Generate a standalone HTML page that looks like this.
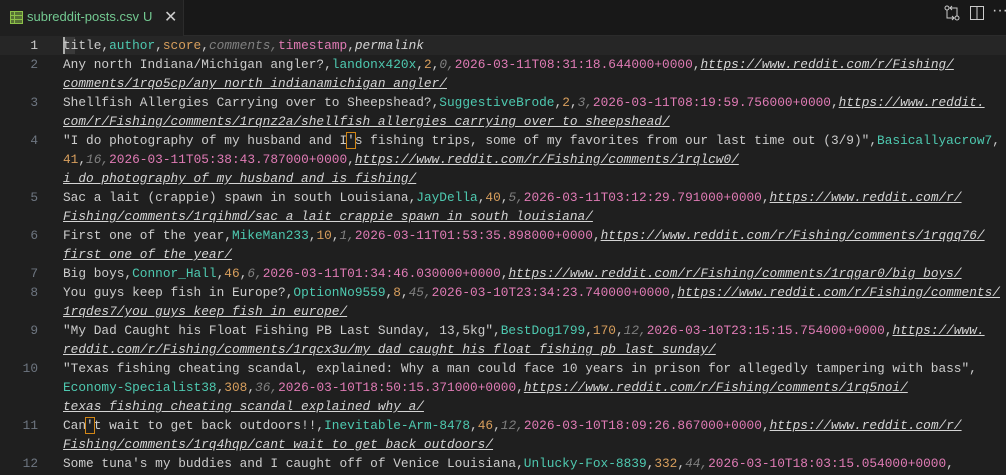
<html><head><style>
body{margin:0;width:1006px;height:475px;background:#1f1f1f;overflow:hidden;font-family:"Liberation Mono",monospace;font-size:12.8px;color:#cccccc}
.tabs{position:absolute;left:0;top:0;width:1006px;height:35px;background:#181818;border-bottom:1px solid #2b2b2b}
.tab{position:absolute;left:0;top:0;width:183px;height:36px;background:#1f1f1f;border-right:1px solid #2b2b2b;font-family:"Liberation Sans",sans-serif;font-size:13px;color:#73c991}
.bc{position:absolute;left:0;top:36px;width:1006px;height:0}
.r{position:absolute;left:63px;white-space:pre;height:19px;line-height:19px}
.n{position:absolute;width:38px;text-align:right;left:0;color:#6e7681;line-height:19px}
.a{color:#4ec9b0}.s{color:#d89f5d}.c{color:#808080;font-style:italic}.ts{color:#e07bb5}.u{font-style:italic;text-decoration:underline;color:#d4d4d4}
.hl{position:absolute;left:0;top:36px;width:1006px;height:19px;background:#262626}
</style></head><body>
<div class="tabs"><div class="tab">
<svg style="position:absolute;left:10px;top:11px" width="13" height="13"><rect x="0.5" y="0.5" width="12" height="12" fill="none" stroke="#8dc149"/><path d="M1 4.5H12M1 8.5H12M4.5 1V12" stroke="#8dc149"/><rect x="1" y="1" width="11" height="11" fill="#8dc149" opacity=".5"/></svg>
<span style="position:absolute;left:27px;top:9px;color:#73c991">subreddit-posts.csv</span><span style="position:absolute;left:143px;top:9px">U</span>
<span style="position:absolute;left:164px;top:7px;color:#ccc;font-size:16px">✕</span></div>
<svg style="position:absolute;left:944px;top:5px" width="16" height="16" fill="none" stroke="#ccc"><circle cx="3" cy="3" r="2"/><circle cx="13" cy="13" r="2"/><path d="M3 5V13H10M8 11L10 13 8 15M13 11V3H6M8 1L6 3 8 5"/></svg>
<svg style="position:absolute;left:969px;top:5px" width="16" height="16" fill="none" stroke="#ccc"><rect x="1.5" y="1.5" width="13" height="13"/><path d="M8 1.5V14.5"/></svg>
<span style="position:absolute;left:992px;top:2px;color:#ccc;font-family:'Liberation Sans';font-size:16px">···</span>
</div>
<div class="hl"></div>
<div style="position:absolute;left:63px;top:37px;width:12px;height:17px;background:#3a3a3a"></div>
<div style="position:absolute;left:63px;top:37px;width:2px;height:17px;background:#aeafad"></div>
<div class="bc">
<div class="n" style="top:0;color:#ccc">1</div><div class="r" style="top:0">title,<span class="a">author</span>,<span class="s">score</span>,<span class="c">comments,</span><span class="ts">timestamp</span>,<span class="u" style="text-decoration:none">permalink</span></div>
<div class="n" style="top:19px">2</div><div class="r" style="top:19px">Any north Indiana/Michigan angler?,<span class="a">landonx420x</span>,<span class="s">2</span>,<span class="c">0,</span><span class="ts">2026-03-11T08:31:18.644000+0000</span>,<span class="u">https://www.reddit.com/r/Fishing/</span></div>
<div class="r" style="top:38px"><span class="u">comments/1rqo5cp/any_north_indianamichigan_angler/</span></div>
<div class="n" style="top:57px">3</div><div class="r" style="top:57px">Shellfish Allergies Carrying over to Sheepshead?,<span class="a">SuggestiveBrode</span>,<span class="s">2</span>,<span class="c">3,</span><span class="ts">2026-03-11T08:19:59.756000+0000</span>,<span class="u">https://www.reddit.</span></div>
<div class="r" style="top:76px"><span class="u">com/r/Fishing/comments/1rqnz2a/shellfish_allergies_carrying_over_to_sheepshead/</span></div>
<div class="n" style="top:95px">4</div><div class="r" style="top:95px">"I do photography of my husband and I<span style="outline:1px solid #d18616">'</span>s fishing trips, some of my favorites from our last time out (3/9)",<span class="a">Basicallyacrow7</span>,</div>
<div class="r" style="top:114px"><span class="s">41</span>,<span class="c">16,</span><span class="ts">2026-03-11T05:38:43.787000+0000</span>,<span class="u">https://www.reddit.com/r/Fishing/comments/1rqlcw0/</span></div>
<div class="r" style="top:133px"><span class="u">i_do_photography_of_my_husband_and_is_fishing/</span></div>
<div class="n" style="top:152px">5</div><div class="r" style="top:152px">Sac a lait (crappie) spawn in south Louisiana,<span class="a">JayDella</span>,<span class="s">40</span>,<span class="c">5,</span><span class="ts">2026-03-11T03:12:29.791000+0000</span>,<span class="u">https://www.reddit.com/r/</span></div>
<div class="r" style="top:171px"><span class="u">Fishing/comments/1rqihmd/sac_a_lait_crappie_spawn_in_south_louisiana/</span></div>
<div class="n" style="top:190px">6</div><div class="r" style="top:190px">First one of the year,<span class="a">MikeMan233</span>,<span class="s">10</span>,<span class="c">1,</span><span class="ts">2026-03-11T01:53:35.898000+0000</span>,<span class="u">https://www.reddit.com/r/Fishing/comments/1rqgq76/</span></div>
<div class="r" style="top:209px"><span class="u">first_one_of_the_year/</span></div>
<div class="n" style="top:228px">7</div><div class="r" style="top:228px">Big boys,<span class="a">Connor_Hall</span>,<span class="s">46</span>,<span class="c">6,</span><span class="ts">2026-03-11T01:34:46.030000+0000</span>,<span class="u">https://www.reddit.com/r/Fishing/comments/1rqgar0/big_boys/</span></div>
<div class="n" style="top:247px">8</div><div class="r" style="top:247px">You guys keep fish in Europe?,<span class="a">OptionNo9559</span>,<span class="s">8</span>,<span class="c">45,</span><span class="ts">2026-03-10T23:34:23.740000+0000</span>,<span class="u">https://www.reddit.com/r/Fishing/comments/</span></div>
<div class="r" style="top:266px"><span class="u">1rqdes7/you_guys_keep_fish_in_europe/</span></div>
<div class="n" style="top:285px">9</div><div class="r" style="top:285px">"My Dad Caught his Float Fishing PB Last Sunday, 13,5kg",<span class="a">BestDog1799</span>,<span class="s">170</span>,<span class="c">12,</span><span class="ts">2026-03-10T23:15:15.754000+0000</span>,<span class="u">https://www.</span></div>
<div class="r" style="top:304px"><span class="u">reddit.com/r/Fishing/comments/1rqcx3u/my_dad_caught_his_float_fishing_pb_last_sunday/</span></div>
<div class="n" style="top:323px">10</div><div class="r" style="top:323px">"Texas fishing cheating scandal, explained: Why a man could face 10 years in prison for allegedly tampering with bass",</div>
<div class="r" style="top:342px"><span class="a">Economy-Specialist38</span>,<span class="s">308</span>,<span class="c">36,</span><span class="ts">2026-03-10T18:50:15.371000+0000</span>,<span class="u">https://www.reddit.com/r/Fishing/comments/1rq5noi/</span></div>
<div class="r" style="top:361px"><span class="u">texas_fishing_cheating_scandal_explained_why_a/</span></div>
<div class="n" style="top:380px">11</div><div class="r" style="top:380px">Can<span style="outline:1px solid #d18616">'</span>t wait to get back outdoors!!,<span class="a">Inevitable-Arm-8478</span>,<span class="s">46</span>,<span class="c">12,</span><span class="ts">2026-03-10T18:09:26.867000+0000</span>,<span class="u">https://www.reddit.com/r/</span></div>
<div class="r" style="top:399px"><span class="u">Fishing/comments/1rq4hqp/cant_wait_to_get_back_outdoors/</span></div>
<div class="n" style="top:418px">12</div><div class="r" style="top:418px">Some tuna's my buddies and I caught off of Venice Louisiana,<span class="a">Unlucky-Fox-8839</span>,<span class="s">332</span>,<span class="c">44,</span><span class="ts">2026-03-10T18:03:15.054000+0000</span>,</div>
</div>
</body></html>
